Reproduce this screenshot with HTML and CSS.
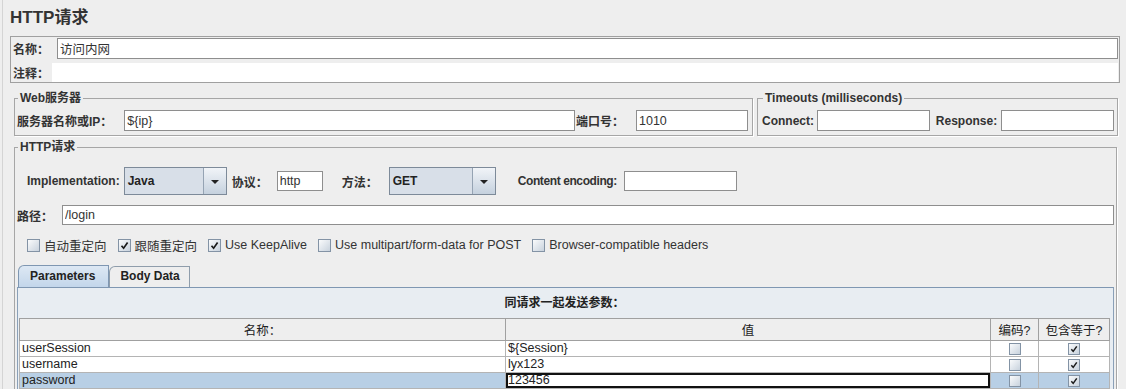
FILE: index.html
```html
<!DOCTYPE html>
<html lang="zh-CN">
<head>
  <meta charset="UTF-8" />
  <title>HTTP请求</title>
  <link rel="stylesheet" href="styles.css">
</head>
<body>
  <div class="page">
    <h1 class="title">HTTP请求</h1>

    <div class="name-panel">
      <div class="name-row">
        <span class="label name-label">名称：</span>
        <input class="field name-field" type="text" value="访问内网" />
      </div>
      <div class="comment-row">
        <span class="label comment-label">注释：</span>
        <div class="comment"></div>
      </div>
    </div>

    <div class="server-row">
      <fieldset class="group web-group">
        <legend>Web服务器</legend>
        <span class="label">服务器名称或IP：</span>
        <input class="field host" type="text" value="${ip}" />
        <span class="label">端口号：</span>
        <input class="field port" type="text" value="1010" />
      </fieldset>
      <fieldset class="group timeout-group">
        <legend>Timeouts (milliseconds)</legend>
        <span class="label">Connect:</span>
        <input class="field connect" type="text" />
        <span class="label response-label">Response:</span>
        <input class="field response" type="text" />
      </fieldset>
    </div>

    <fieldset class="group http-group">
      <legend>HTTP请求</legend>

      <div class="impl-row">
        <span class="label">Implementation:</span>
        <div class="combo impl-combo">
          <span class="combo-value">Java</span>
          <span class="combo-btn"></span>
        </div>
        <span class="label protocol-label">协议：</span>
        <input class="field protocol" type="text" value="http" />
        <span class="label method-label">方法：</span>
        <div class="combo method-combo">
          <span class="combo-value">GET</span>
          <span class="combo-btn"></span>
        </div>
        <span class="label encoding-label">Content encoding:</span>
        <input class="field encoding" type="text" />
      </div>

      <div class="path-row">
        <span class="label path-label">路径：</span>
        <input class="field path" type="text" value="/login" />
      </div>

      <div class="options">
        <span class="check"><span class="box"></span>自动重定向</span>
        <span class="check"><span class="box checked"><svg viewBox="0 0 9 9"><path d="M1.5 4.8 L3.6 7.2 L7.6 1.6"/></svg></span>跟随重定向</span>
        <span class="check"><span class="box checked"><svg viewBox="0 0 9 9"><path d="M1.5 4.8 L3.6 7.2 L7.6 1.6"/></svg></span>Use KeepAlive</span>
        <span class="check"><span class="box"></span>Use multipart/form-data for POST</span>
        <span class="check"><span class="box"></span>Browser-compatible headers</span>
      </div>

      <div class="tabs">
        <span class="tab active">Parameters</span>
        <span class="tab">Body Data</span>
      </div>

      <div class="tab-panel">
        <div class="table-title">同请求一起发送参数：</div>
        <table class="params">
          <colgroup>
            <col class="col-name">
            <col class="col-value">
            <col class="col-encode">
            <col class="col-equals">
          </colgroup>
          <thead>
            <tr>
              <th>名称：</th>
              <th>值</th>
              <th>编码?</th>
              <th>包含等于?</th>
            </tr>
          </thead>
          <tbody>
            <tr>
              <td>userSession</td>
              <td>${Session}</td>
              <td class="cell-check"><span class="box small"></span></td>
              <td class="cell-check"><span class="box small checked"><svg viewBox="0 0 9 9"><path d="M1.5 4.8 L3.6 7.2 L7.6 1.6"/></svg></span></td>
            </tr>
            <tr>
              <td>username</td>
              <td>lyx123</td>
              <td class="cell-check"><span class="box small"></span></td>
              <td class="cell-check"><span class="box small checked"><svg viewBox="0 0 9 9"><path d="M1.5 4.8 L3.6 7.2 L7.6 1.6"/></svg></span></td>
            </tr>
            <tr class="selected">
              <td>password</td>
              <td class="editing">123456</td>
              <td class="cell-check"><span class="box small"></span></td>
              <td class="cell-check"><span class="box small checked"><svg viewBox="0 0 9 9"><path d="M1.5 4.8 L3.6 7.2 L7.6 1.6"/></svg></span></td>
            </tr>
            <tr>
              <td></td>
              <td></td>
              <td></td>
              <td></td>
            </tr>
          </tbody>
        </table>
      </div>
    </fieldset>
  </div>
</body>
</html>
```

FILE: styles.css
```css
html, body {
  margin: 0;
  height: 100%;
  overflow: hidden;
}

body {
  background: #eeeeee;
  font-family: "Liberation Sans", "Noto Sans CJK SC", sans-serif;
  font-size: 12px;
  color: #222;
}

.page {
  margin-left: 2px;
  border-left: 1px solid #d4d4d4;
  padding: 0 6px 0 7px;
  height: 100%;
}

.title {
  margin: 0 0 8px;
  padding-top: 8px;
  font-size: 17px;
  line-height: 20px;
  height: 20px;
  color: #333;
}

.label {
  font-weight: bold;
  white-space: nowrap;
  color: #333;
}

.field {
  box-sizing: border-box;
  height: 21px;
  border: 1px solid #8e8e8e;
  background: #fff;
  font-family: inherit;
  font-size: 12.5px;
  color: #333;
  padding: 0 2px;
  outline: none;
  min-width: 0;
}

/* name / comment */
.name-panel {
  border: 1px solid #a0a0a0;
  padding: 1px 1px 0 2px;
}

.name-row,
.comment-row {
  display: flex;
  align-items: center;
}

.name-row {
  height: 21px;
  margin-bottom: 4px;
}

.name-label {
  margin-right: 8px;
}

.name-field {
  flex: 1;
}

.comment-row {
  height: 19px;
}

.comment-label {
  margin-right: 3px;
}

.comment {
  flex: 1;
  height: 19px;
  background: #fff;
}

/* groups */
.group {
  margin: 0;
  border: 1px solid #a6a6a6;
  box-shadow: 1px 1px 0 #fff;
  padding: 5px 4px 4px 2px;
  min-width: 0;
}

.group legend {
  font-weight: bold;
  line-height: 14px;
  padding: 0 2px;
  margin-left: 1px;
  color: #333;
}

.server-row {
  display: flex;
  align-items: flex-start;
  gap: 4px;
  margin: 8px 2px 0 4px;
}

.web-group {
  flex: 1;
  display: flex;
  align-items: center;
}

.host {
  flex: 1;
  margin: 0 1px 0 12px;
}

.port {
  width: 112px;
  margin-left: 12px;
}

.timeout-group {
  box-sizing: border-box;
  width: 361px;
  display: flex;
  align-items: center;
  padding: 5px 3px 4px 4px;
}

.connect,
.response {
  flex: 1;
}

.connect {
  margin-left: 3px;
}

.response-label {
  margin: 0 4px 0 6px;
}

/* http request */
.http-group {
  margin: 4px 3px 0 4px;
  padding: 13px 2px 40px 2px;
}

.impl-row {
  display: flex;
  align-items: center;
  height: 28px;
  margin-left: 10px;
}

.combo {
  box-sizing: border-box;
  display: flex;
  height: 28px;
  border: 1px solid #7d8a99;
  background: #d8dfe8;
}

.impl-combo {
  width: 103px;
  margin-left: 4px;
}

.method-combo {
  width: 107px;
  margin-left: 11px;
}

.combo-value {
  flex: 1;
  font-weight: bold;
  line-height: 26px;
  padding-left: 3px;
  color: #222;
}

.combo-btn {
  width: 22px;
  border-left: 1px solid #95a3b3;
  background: linear-gradient(#f1f4f8, #c5d1de);
  display: flex;
  align-items: center;
  justify-content: center;
}

.combo-btn::after {
  content: "";
  border-left: 4px solid transparent;
  border-right: 4px solid transparent;
  border-top: 4px solid #222;
  margin-top: 1px;
}

.protocol-label {
  margin-left: 5px;
}

.protocol {
  width: 46px;
  height: 20px;
  margin-left: 9px;
}

.method-label {
  margin-left: 19px;
}

.encoding-label {
  margin-left: 22px;
  letter-spacing: -0.4px;
}

.encoding {
  width: 113px;
  height: 20px;
  margin-left: 7px;
}

.path-row {
  display: flex;
  align-items: center;
  height: 20px;
  margin-top: 10px;
}

.path-label {
  margin-right: 9px;
}

.path {
  flex: 1;
  height: 20px;
}

/* checkboxes */
.options {
  display: flex;
  align-items: center;
  gap: 11px;
  height: 14px;
  margin: 13px 0 0 10px;
  font-size: 12.5px;
  color: #333;
}

.check {
  display: flex;
  align-items: center;
  gap: 4px;
  white-space: nowrap;
}

.box {
  box-sizing: border-box;
  display: inline-flex;
  align-items: center;
  justify-content: center;
  width: 13px;
  height: 13px;
  border: 1px solid #8393a5;
  background: linear-gradient(135deg, #fafbfc, #c8d2dd);
}

.box svg {
  width: 9px;
  height: 9px;
}

.box path {
  fill: none;
  stroke: #1a1a1a;
  stroke-width: 1.7;
}

.box.small {
  width: 12px;
  height: 12px;
  vertical-align: middle;
}

.box.small svg {
  width: 8px;
  height: 8px;
}

/* tabs */
.tabs {
  display: flex;
  align-items: flex-end;
  height: 22px;
  margin: 13px 0 0 1px;
}

.tab {
  box-sizing: border-box;
  height: 21px;
  line-height: 19px;
  padding: 0 9px 0 10px;
  font-weight: bold;
  color: #222;
  border: 1px solid #8f9dab;
  border-bottom: none;
  border-top-left-radius: 6px;
  background: #eeeeee;
}

.tab.active {
  height: 22px;
  line-height: 21px;
  padding: 0 13px 0 11px;
  border-color: #7f97b2;
  background: linear-gradient(#dde8f4, #c3d6ea);
}

.tab-panel {
  border: 1px solid #8aa0b8;
  border-top-color: #7f97b2;
  background: #e8edf2;
  padding: 0 3px 20px 1px;
}

.table-title {
  height: 30px;
  line-height: 30px;
  text-align: center;
  font-weight: bold;
  color: #222;
}

/* parameters table */
.params {
  width: 100%;
  border-collapse: collapse;
  table-layout: fixed;
  background: #fff;
  font-size: 12.5px;
  color: #222;
}

.col-name {
  width: 486px;
}

.col-value {
  width: 485px;
}

.col-encode {
  width: 48px;
}

.params th {
  height: 21px;
  padding: 0;
  font-weight: normal;
  background: #eeeeee;
  border: 1px solid #a0a0a0;
}

.params td {
  height: 15px;
  padding: 0 2px;
  line-height: 15px;
  white-space: nowrap;
  overflow: hidden;
  border: 1px solid #b4b4b4;
}

.params td.cell-check {
  text-align: center;
  padding: 0;
}

.params tr.selected td {
  background: #b8cfe5;
}

.params tr.selected td.editing {
  background: #fff;
  box-shadow: inset 0 0 0 2px #111;
}
```
